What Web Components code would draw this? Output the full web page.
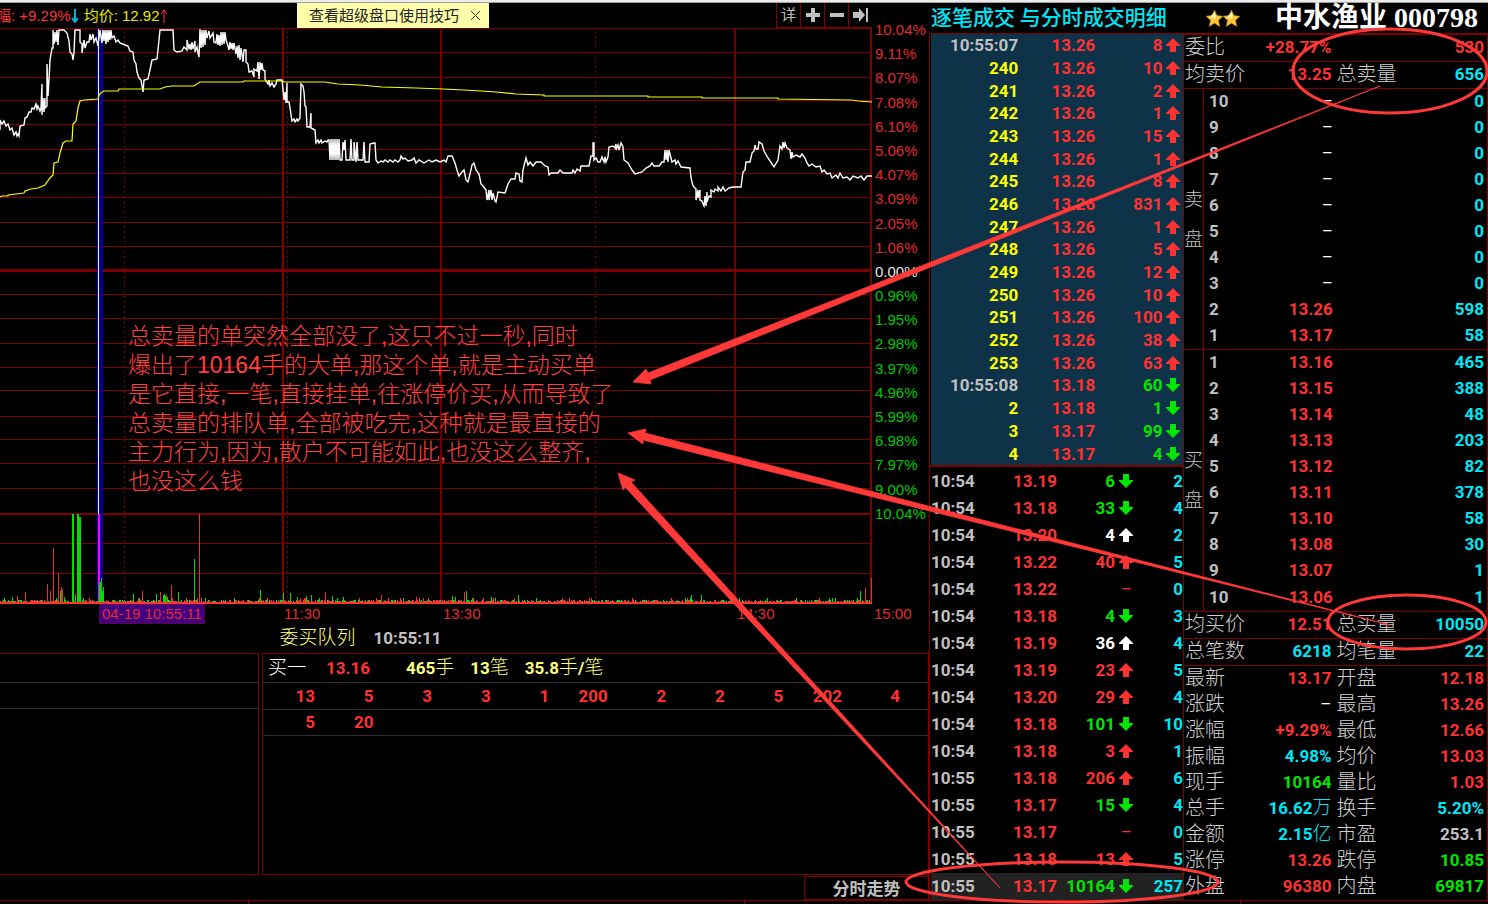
<!DOCTYPE html>
<html lang="zh-CN">
<head>
<meta charset="utf-8">
<title>中水渔业 000798</title>
<style>
  html, body {
    margin: 0;
    height: 100%;
    background: #000;
  }
  body {
    --line: #800000;
    --red: #ff3232;
    --green: #00e600;
    --cyan: #00e6f6;
    --grey: #c0c0c0;
    --yellow: #ffff00;
    --pale: #ffff80;
    --num: bold 17px/20px Roboto, "Noto Sans CJK SC", sans-serif;
    --label: 400 15px/20px "Liberation Sans", "Noto Sans CJK SC", sans-serif;
    color: var(--grey);
    font: var(--num);
  }
</style>
</head>
<body>
<trade-desk></trade-desk>

<script>
// Estilos comunes de todas las tablas de cotización
const tableCss = `
  table { width: 100%; height: 100%; border-collapse: collapse; table-layout: fixed; font: var(--num); }
  td, th { padding: 0; white-space: nowrap; text-align: right; }
  th { text-align: left; font-weight: 300; font-size: 20px; color: #d0d0d0; }
  .cj { font-weight: 300; font-size: 19px; }
  .red { color: var(--red); }
  .green { color: var(--green); }
  .cyan { color: var(--cyan); }
  .yellow { color: var(--yellow); }
  .grey { color: var(--grey); }
  .white { color: #fff; }
  svg { display: inline-block; vertical-align: -1px; fill: currentColor; }
`;

const COLORS = { r: 'red', g: 'green', c: 'cyan', y: 'yellow', w: 'white', s: 'grey' };

const arrow = (dir) => {
  if (dir === 'u') return '<svg width="14" height="14" viewBox="0 0 14 14"><path d="M7 0 14 7V8H10V14H4V8H0V7Z"/></svg>';
  if (dir === 'd') return '<svg width="14" height="14" viewBox="0 0 14 14"><path d="M4 0H10V6H14V7L7 14 0 7V6H4Z"/></svg>';
  return '–';
};

// Los caracteres chinos van en trazo fino junto a las cifras en negrita
const mix = (text) => text.replace(/[\u4e00-\u9fff]+/g, '<span class="cj">$&</span>');

function mount(host, html) {
  const template = document.createElement('template');
  template.innerHTML = html;
  host.attachShadow({ mode: 'open' }).appendChild(template.content.cloneNode(true));
}

class TradeDesk extends HTMLElement {
  constructor() {
    super();
    mount(this, `
      <style>
        :host { display: flex; flex-direction: column; position: relative; height: 100vh; min-height: 800px; overflow: hidden; background: #000; }
        .edge { height: 2px; flex: none; background: #ececec; border-bottom: 1px solid #a0a0a0; }
        main { flex: 1; min-height: 0; display: grid; grid-template-columns: 929fr 255fr 304fr; grid-template-rows: minmax(0, 1fr); }
        .left, .right { display: flex; flex-direction: column; min-width: 0; min-height: 0; }
        .right { grid-column: 2 / 4; }
        .cols { flex: 1; min-height: 0; display: grid; grid-template-columns: 255fr 304fr; grid-template-rows: minmax(0, 1fr); border-top: 1px solid var(--line); }
        time-chart { flex: 1; min-height: 0; }
        .foot { flex: none; height: 3px; border-top: 1px solid var(--line); display: flex; justify-content: space-around; }
        .foot i { width: 1px; background: var(--line); }
      </style>
      <div class="edge"></div>
      <main>
        <div class="left">
          <chart-bar></chart-bar>
          <time-chart></time-chart>
          <order-queue></order-queue>
        </div>
        <div class="right">
          <stock-title>
            <span slot="mode">逐笔成交 与分时成交明细</span>
            <span slot="name">中水渔业 000798</span>
          </stock-title>
          <div class="cols">
            <trade-list></trade-list>
            <quote-board></quote-board>
          </div>
        </div>
      </main>
      <div class="foot"><i></i><i></i><i></i></div>
      <mark-layer>
        总卖量的单突然全部没了,这只不过一秒,同时<br>
        爆出了10164手的大单,那这个单,就是主动买单<br>
        是它直接,一笔,直接挂单,往涨停价买,从而导致了<br>
        总卖量的排队单,全部被吃完,这种就是最直接的<br>
        主力行为,因为,散户不可能如此,也没这么整齐,<br>
        也没这么钱
      </mark-layer>
    `);
  }
}

class ChartBar extends HTMLElement {
  constructor() {
    super();
    mount(this, `
      <style>
        :host { display: flex; align-items: stretch; height: 25px; flex: none; font: var(--label); padding-right: 57px; overflow: hidden; }
        .stats { flex: 299; display: flex; align-items: center; white-space: nowrap; min-width: 0; }
        .stats .pct { color: var(--red); margin-left: -4px; }
        .stats .avg { color: #e8e800; margin-left: 5px; }
        .stats svg { flex: none; }
        .tip { flex: none; display: flex; align-items: center; gap: 10px; background: #ffffaa; color: #222; padding: 0 6px 0 12px; }
        .tip button { border: 0; background: none; padding: 0; width: 14px; height: 20px; color: #333; display: grid; place-items: center; }
        .gap { flex: 289; }
        .tools { flex: none; display: flex; }
        .tools button { width: 24px; padding: 0; border: 0 solid var(--line); border-width: 0 0 1px 1px; background: #000; color: var(--grey); font: inherit; display: grid; place-items: center; }
      </style>
      <div class="stats">
        <span class="pct">幅: +9.29%</span>
        <svg width="8" height="14"><path d="M4 0V12M1 9 4 13 7 9" stroke="#00b4e6" stroke-width="2" fill="none"/></svg>
        <span class="avg">均价: 12.92</span>
        <svg width="8" height="14"><path d="M4 14V1M1 5 4 1 7 5" stroke="#ff3232" fill="none"/></svg>
      </div>
      <div class="tip"><span>查看超级盘口使用技巧</span>
        <button aria-label="关闭"><svg width="9" height="9"><path d="M0 0 9 9M9 0 0 9" stroke="currentColor"/></svg></button>
      </div>
      <div class="gap"></div>
      <div class="tools">
        <button>详</button>
        <button aria-label="放大"><svg width="14" height="14"><path d="M7 0V14M0 7H14" stroke="currentColor" stroke-width="4"/></svg></button>
        <button aria-label="缩小"><svg width="14" height="14"><path d="M0 7H14" stroke="currentColor" stroke-width="4"/></svg></button>
        <button aria-label="移到最后"><svg width="16" height="14"><path d="M0 4H6V0L12 7 6 14V10H0Z" fill="currentColor"/><path d="M14 0V14" stroke="currentColor" stroke-width="2"/></svg></button>
      </div>
    `);
  }
}

const PRICE = `0,130 0,120 2,124 4,121 6,126 8,124 10,130 12,128 14,135 16,132 17,136 18,134 19,136 20,126 24,125 25,118
  27,117 29,112 31,112 32,108 34,109 36,104 37,109 38,106 40,111 41,108 42,84 42,115 43,98 44,112 45,98 45,108 47,106 47,64 48,96
  49,80 50,60 52,48 53,48 53,30 54,44 55,32 56,42 57,30 58,45 59,30 64,30 67,33 69,41 70,52 72,54 73,60 74,53 75,30 80,30 80,42 82,44
  82,53 84,40 85,48 87,42 89,42 90,34 91,40 93,34 94,42 96,38 98,46 100,30 102,43 103,30 104,41 105,30 106,44 107,30 108,42 109,30
  110,40 111,30 112,38 114,36 116,42 118,40 120,43 125,45 128,46 130,51 133,52 134,60 136,64 137,72 139,78 141,80 143,92 144,80
  148,79 150,70 152,60 157,59 159,40 160,30 173,30 174,50 177,52 182,51 184,47 187,50 187,40 189,49 190,44 191,50 192,42 193,49
  195,41 195,52 197,47 198,53 199,57 200,29 201,48 202,30 203,47 204,30 205,45 206,30 207,38 209,31 210,38 213,33 214,42 216,43
  217,34 218,45 219,35 220,46 221,32 222,45 223,32 224,44 225,32 226,40 228,46 229,50 230,42 231,49 232,43 233,50 234,43 236,54
  237,46 238,58 239,45 240,60 241,48 242,54 243,62 244,50 246,50 246,62 248,64 249,72 252,71 254,77 254,69 257,71 258,62 259,79
  260,62 261,70 262,63 263,70 265,71 265,79 268,84 269,80 270,86 272,83 274,87 276,84 277,80 282,80 284,100 285,92 286,103 287,83
  287,102 289,102 290,108 292,121 294,119 295,122 297,119 298,121 300,118 301,84 303,86 304,92 305,106 306,107 307,127 310,127
  311,113 311,128 315,130 316,143 318,140 319,143 321,140 322,143 325,141 327,142 328,140 329,140 330,160 331,139 332,160 333,139
  334,160 335,139 336,160 337,139 338,160 339,139 340,160 342,160 343,142 344,150 345,140 346,160 350,160 351,139 352,160 354,160
  354,142 356,162 357,142 358,160 363,160 364,142 365,162 369,162 370,144 374,143 375,143 376,160 378,163 381,161 383,162 385,160
  388,162 390,160 393,162 395,160 398,162 400,160 401,156 403,159 405,158 408,161 412,160 414,158 416,163 419,160 424,163 429,160
  432,162 436,160 440,162 444,160 446,162 448,156 452,156 455,163 457,170 459,176 462,172 464,170 466,180 468,182 470,174 472,165
  474,163 476,170 479,174 481,184 483,186 486,190 487,200 489,190 489,200 491,190 492,200 493,193 495,201 496,202 498,192 505,193
  508,184 511,179 515,179 516,173 519,174 520,181 522,182 523,170 525,162 526,158 528,165 530,162 533,166 536,162 541,162 545,166
  548,167 549,175 551,173 558,173 560,170 563,173 572,173 573,170 575,173 577,169 580,171 581,166 589,166 591,156 593,156 593,143
  594,143 594,160 596,158 598,162 600,162 602,157 604,162 605,157 606,162 608,157 609,147 613,146 615,148 616,144 616,150 618,145
  619,150 621,143 623,147 624,160 628,163 632,170 635,174 642,172 646,168 650,166 652,163 654,166 659,166 662,162 664,162 665,150
  666,160 667,150 668,162 669,150 672,162 675,160 676,164 678,161 681,167 690,168 691,178 693,186 696,189 696,200 698,190 698,198
  700,190 700,200 702,201 703,204 704,206 705,196 706,206 707,192 707,202 709,196 711,197 711,190 714,192 715,189 718,191 718,187
  721,191 723,187 725,191 729,188 733,187 741,187 743,172 745,170 746,162 750,162 752,153 754,151 755,145 756,149 758,149 759,142
  762,144 764,151 768,158 772,164 774,167 778,160 780,146 782,149 783,142 784,148 785,143 787,148 790,150 791,159 792,152 793,157
  796,155 800,157 802,154 805,158 807,163 809,166 812,164 816,167 820,166 822,172 824,170 827,174 830,173 832,178 836,175 838,178
  840,173 843,178 847,177 850,180 853,176 858,178 861,176 864,180 867,176 872,176`;

const AVERAGE = `0,197 2,196 8,196 8,195 16,194 24,193 25,191 31,189 38,188 45,185 47,182 50,178 53,175 54,163 58,162 60,153 63,143
  66,141 72,141 73,124 76,121 78,108 80,101 84,100 98,99 99,95 102,92 104,91 118,91 119,89 160,89 165,87 172,86 194,86 200,82 243,82
  244,81 283,81 284,82 325,82 338,84 360,85 382,87 416,88 443,89 464,90 481,91 496,92 516,94 544,95 544,96 648,96 648,97 702,97
  702,98 778,98 778,99 851,100 858,101 872,102`;

// x, altura, color de las barras de volumen más altas
const PEAKS = [[17,7,'r'],[12,6,'g'],[25,11,'r'],[47,19,'r'],[50,12,'r'],[53,55,'r'],[58,30,'r'],[60,12,'g'],[61,16,'r'],[62,14,'r'],[64,6,'g'],
  [72,89,'g'],[73,46,'g'],[75,8,'g'],[77,89,'g'],[78,29,'g'],[79,86,'g'],[99,20,'g'],[100,21,'g'],[101,25,'g'],[102,12,'g'],[103,16,'g'],
  [133,9,'g'],[142,12,'r'],[156,9,'g'],[160,11,'r'],[163,8,'g'],[164,9,'g'],[165,7,'g'],[166,8,'r'],[167,6,'g'],[171,18,'r'],[178,11,'g'],
  [194,44,'g'],[199,89,'r'],[260,13,'g'],[283,10,'g'],[290,10,'g'],[297,6,'g'],[306,7,'g'],[311,8,'g'],[325,11,'r'],[332,7,'g'],[343,6,'g'],
  [381,8,'r'],[416,6,'r'],[452,7,'g'],[455,6,'g'],[464,11,'r'],[466,12,'g'],[491,6,'g'],[514,5,'r'],[518,8,'g'],[691,8,'g'],[701,8,'g'],
  [832,5,'g'],[857,5,'g'],[860,12,'g'],[865,15,'r'],[871,25,'r']];

class TimeChart extends HTMLElement {
  constructor() {
    super();
    const rows = [28, 52, 77, 100, 124, 149, 173, 197, 222, 246, 270, 294, 318, 343, 367, 390, 416, 439, 463, 488, 513, 543, 573];
    const hLines = rows.map((y) => `<path d="M0 ${y + 0.5}H872" stroke-width="${y === 270 ? 3 : y === 513 ? 2 : 1}"/>`).join('');
    const dots = [124, 287, 595].map((x) => `<path d="M${x + 0.5} 31V601" stroke-dasharray="2 3"/>`).join('');

    let bars = '';
    let seed = 7;
    for (let x = 0; x < 870; x++) {
      seed = (seed * 1103 + 377) % 9973;
      const h = seed % 17 === 0 ? 4 : seed % 3;
      bars += `<path d="M${x + 0.5} 603V${602 - h}" stroke="${seed % 5 < 2 ? '#00e600' : '#ff3232'}"/>`;
    }
    for (const [x, h, c] of PEAKS) {
      bars += `<path d="M${x + 0.5} 603V${603 - h}" stroke="${c === 'g' ? '#00e000' : '#e83030'}" stroke-width="${h > 80 && c === 'g' ? 2 : 1}"/>`;
    }

    const pct = ['10.04', '9.11', '8.07', '7.08', '6.10', '5.06', '4.07', '3.09', '2.05', '1.06', '0.00',
      '0.96', '1.95', '2.98', '3.97', '4.96', '5.99', '6.98', '7.97', '9.00', '10.04'];
    const labels = pct.map((p, i) => `<span class="${i < 10 ? 'up' : i > 10 ? 'down' : 'zero'}">${p}%</span>`).join('');

    mount(this, `
      <style>
        :host { display: flex; flex-direction: column; font: var(--label); color: #e02c2c; }
        .plot { flex: 1; min-height: 0; display: grid; grid-template-columns: minmax(0, 1fr) 57px; grid-template-rows: minmax(0, 1fr); }
        svg { width: 100%; height: 100%; display: block; }
        .scale { display: flex; flex-direction: column; justify-content: space-between; margin: -8px 0 80px; padding-left: 3px; }
        .scale span { line-height: 20px; }
        .down { color: #00c800; }
        .zero { color: #e6e6e6; }
        .times { flex: none; display: grid; grid-template-columns: 99fr 184fr 159fr 294fr 137fr 56fr; height: 20px; }
        .times span { white-space: nowrap; justify-self: start; padding-left: 1px; }
        .times .now { background: #400080; padding: 0 2px; border: 1px solid #600050; line-height: 18px; }
      </style>
      <div class="plot">
        <svg viewBox="0 28 872 576" preserveAspectRatio="none" fill="none" shape-rendering="crispEdges">
          <g stroke="#800000">
            ${hLines}
            <path d="M283 29V604" stroke-width="2"/><path d="M441 29V604M735 29V604" stroke="#700000" stroke-width="2"/>
            <path d="M871 29V604" stroke-width="2"/>
            ${dots}
          </g>
          <rect x="97" y="29" width="6" height="574" fill="#0000a0"/>
          <path d="M98.500 29V514" stroke="#ffff80"/>
          <path d="M98.500 514V603" stroke="#ff00ff" stroke-width="2"/>
          ${bars}
          <path d="M0 603H872" stroke="#ff3232" stroke-width="2"/>
          <g shape-rendering="auto">
            <polyline points="${PRICE}" stroke="#fff" stroke-width="1.4"/>
            <polyline points="${AVERAGE}" stroke="#ffff00" stroke-width="1.2"/>
          </g>
        </svg>
        <div class="scale">${labels}</div>
      </div>
      <div class="times">
        <span></span><span class="now">04-19 10:55:11</span><span>11:30</span><span>13:30</span><span>14:30</span><span>15:00</span>
      </div>
    `);
  }
}

class OrderQueue extends HTMLElement {
  constructor() {
    super();
    const cells = (list) => Array.from({ length: 11 }, (_, i) => `<td>${list[i] || ''}</td>`).join('');
    mount(this, `
      <style>
        ${tableCss}
        :host { display: block; flex: none; }
        h2 { margin: 0; height: 29px; display: flex; align-items: center; justify-content: center; gap: 18px; padding: 0 208px 2px 0; box-sizing: border-box; font: var(--num); }
        h2 .cj { color: var(--pale); }
        .boxes { display: grid; grid-template-columns: 259fr 667fr; gap: 3px; height: 222px; }
        .box { border: 1px solid var(--line); min-width: 0; }
        .empty { border-left: 0; }
        .empty i { display: block; height: 25px; border-bottom: 1px solid #303030; }
        .empty i:first-child { height: 28px; }
        .head { display: flex; align-items: center; height: 28px; padding-left: 5px; border-bottom: 1px solid #303030; color: var(--pale); white-space: nowrap; }
        .head .white { margin-right: 20px; }
        .head .red { margin-right: 36px; }
        .head .qty { margin-right: 16px; }
        table { height: 53px; color: var(--red); }
        tr { height: 26px; border-bottom: 1px solid #303030; }
        td:last-child { padding-right: 28px; }
        .tabs { display: flex; justify-content: flex-end; height: 25px; padding-top: 1px; box-sizing: border-box; }
        .tabs button { width: 125px; padding: 0; border: 1px solid var(--line); background: #000; color: var(--grey); font: bold 17px/20px "Noto Sans CJK SC", sans-serif; }
      </style>
      <h2><span class="cj">委买队列</span><span>10:55:11</span></h2>
      <div class="boxes">
        <div class="box empty"><i></i><i></i></div>
        <div class="box">
          <div class="head"><span class="cj white">买一</span><span class="red">13.16</span><span class="qty">${mix('465手')}</span><span class="qty">${mix('13笔')}</span><span>${mix('35.8手/笔')}</span></div>
          <table>
            <colgroup><col style="width:52px">${'<col>'.repeat(9)}<col style="width:86px"></colgroup>
            <tr>${cells([13, 5, 3, 3, 1, 200, 2, 2, 5, 202, 4])}</tr>
            <tr>${cells([5, 20])}</tr>
          </table>
        </div>
      </div>
      <div class="tabs"><button>分时走势</button></div>
    `);
  }
}

class StockTitle extends HTMLElement {
  constructor() {
    super();
    const star = '<svg width="17" height="17" viewBox="0 0 17 17"><path d="M8.500 0 11 5.500 17 6.200 12.500 10.300 13.800 16.500 8.500 13.300 3.200 16.500 4.500 10.300 0 6.200 6 5.500Z" fill="#ffc83c" stroke="#b47814" stroke-width=".6"/><path d="M8.500 2 10 6.500 8.500 9 4 7Z" fill="#fff0a0"/></svg>';
    mount(this, `
      <style>
        :host { display: flex; align-items: center; height: 30px; flex: none; padding: 0 10px 0 2px; }
        .mode { color: var(--cyan); font: 500 21px/28px "Noto Sans CJK SC", sans-serif; white-space: nowrap; padding-bottom: 4px; }
        .stars { display: flex; margin: 0 auto; padding-left: 5px; }
        .name { margin: 0; color: #fff; font: bold 28px/28px "Liberation Serif", "Noto Sans CJK SC", serif; white-space: nowrap; }
      </style>
      <div class="mode"><slot name="mode"></slot></div>
      <div class="stars">${star}${star}</div>
      <h1 class="name"><slot name="name"></slot></h1>
    `);
  }
}

// hora, precio, cantidad, dirección
const TICKS = `10:55:07 13.26 8 u|240 13.26 10 u|241 13.26 2 u|242 13.26 1 u|243 13.26 15 u|244 13.26 1 u|245 13.26 8 u|246 13.26 831 u|247 13.26 1 u
|248 13.26 5 u|249 13.26 12 u|250 13.26 10 u|251 13.26 100 u|252 13.26 38 u|253 13.26 63 u|10:55:08 13.18 60 d|2 13.18 1 d|3 13.17 99 d|4 13.17 4 d`;

// hora, precio, cantidad, dirección, número de operaciones, color
const MINUTES = `10:54 13.19 6 d 2 g|10:54 13.18 33 d 4 g|10:54 13.20 4 u 2 w|10:54 13.22 40 u 5 r|10:54 13.22 _ - 0 r|10:54 13.18 4 d 3 g
|10:54 13.19 36 u 4 w|10:54 13.19 23 u 5 r|10:54 13.20 29 u 4 r|10:54 13.18 101 d 10 g|10:54 13.18 3 u 1 r|10:55 13.18 206 u 6 r
|10:55 13.17 15 d 4 g|10:55 13.17 _ - 0 r|10:55 13.18 13 u 5 r|10:55 13.17 10164 d 257 g`;

const parse = (text) => text.split('|').map((row) => row.trim().split(' '));

class TradeList extends HTMLElement {
  constructor() {
    super();
    const ticks = parse(TICKS).map(([t, p, v, d]) => {
      const c = d === 'u' ? 'red' : 'green';
      return `<tr><td class="${t.includes(':') ? 'grey' : 'yellow'}">${t}</td><td class="red">${p}</td><td class="${c}">${v}</td><td class="${c}">${arrow(d)}</td></tr>`;
    }).join('');
    const minutes = parse(MINUTES).map(([t, p, v, d, n, c]) => `<tr><td class="grey">${t}</td><td class="red">${p}</td>
      <td class="${COLORS[c]}">${v === '_' ? '' : v}</td><td class="${COLORS[c]} ${d === '-' ? 'flat' : ''}">${arrow(d)}</td><td class="cyan">${n}</td></tr>`).join('');
    mount(this, `
      <style>
        ${tableCss}
        :host { display: flex; flex-direction: column; border: solid var(--line); border-width: 0 1px 0 1px; box-sizing: border-box; min-width: 0; min-height: 0; }
        .ticks { flex: 431; min-height: 0; background: #0e3248; border-left: 1px solid #000; padding-right: 3px; }
        .minutes { flex: 433; min-height: 0; border-top: 2px solid var(--line); padding: 0 0 0 1px; }
        .minutes td:first-child { text-align: left; }
        .minutes td:nth-child(4) { text-align: center; }
        .minutes tr:last-child { background: #222; }
        td.flat { font-weight: 400; }
      </style>
      <div class="ticks"><table><colgroup><col style="width:35%"><col style="width:31%"><col style="width:27%"><col></colgroup>${ticks}</table></div>
      <div class="minutes"><table><colgroup><col style="width:18%"><col style="width:32%"><col style="width:23%"><col style="width:9%"><col></colgroup>${minutes}</table></div>
    `);
  }
}

class QuoteBoard extends HTMLElement {
  constructor() {
    super();
    const pair = ([l1, v1, c1, l2, v2, c2]) =>
      `<tr><th scope="row">${l1}</th><td class="${v1 === '–' ? 'dash' : COLORS[c1]}">${mix(v1)}</td><th scope="row" class="second">${l2}</th><td class="${COLORS[c2]}">${v2}</td></tr>`;
    const pairs = (list) => `<table><colgroup><col style="width:22%"><col style="width:27%"><col style="width:22%"><col></colgroup>${list.map(pair).join('')}</table>`;
    const level = ([n, p, v]) => `<tr><td class="n">${n}</td><td class="${p === '–' ? 'dash' : 'red'}">${p}</td><td class="cyan">${v}</td></tr>`;
    const levels = (list) => `<table><colgroup><col style="width:17%"><col style="width:29%"><col></colgroup>${list.map(level).join('')}</table>`;

    const sells = [[10, '–', 0], [9, '–', 0], [8, '–', 0], [7, '–', 0], [6, '–', 0], [5, '–', 0], [4, '–', 0], [3, '–', 0], [2, '13.26', 598], [1, '13.17', 58]];
    const buys = [[1, '13.16', 465], [2, '13.15', 388], [3, '13.14', 48], [4, '13.13', 203], [5, '13.12', 82], [6, '13.11', 378],
      [7, '13.10', 58], [8, '13.08', 30], [9, '13.07', 1], [10, '13.06', 1]];
    const stats = [
      ['最新', '13.17', 'r', '开盘', '12.18', 'r'],
      ['涨跌', '–', 'w', '最高', '13.26', 'r'],
      ['涨幅', '+9.29%', 'r', '最低', '12.66', 'r'],
      ['振幅', '4.98%', 'c', '均价', '13.03', 'r'],
      ['现手', '10164', 'g', '量比', '1.03', 'r'],
      ['总手', '16.62万', 'c', '换手', '5.20%', 'c'],
      ['金额', '2.15亿', 'c', '市盈', '253.1', 's'],
      ['涨停', '13.26', 'r', '跌停', '10.85', 'g'],
      ['外盘', '96380', 'r', '内盘', '69817', 'g'],
    ];
    mount(this, `
      <style>
        ${tableCss}
        :host { display: flex; flex-direction: column; border-right: 1px solid var(--line); box-sizing: border-box; min-width: 0; min-height: 0; }
        section { min-height: 0; border-top: 1px solid var(--line); padding: 0 3px 0 1px; }
        section:first-child { border-top: 0; }
        .one { flex: 1; }
        .nine { flex: 9; }
        .book { flex: 10; display: grid; grid-template-columns: 20px minmax(0, 1fr); grid-template-rows: minmax(0, 1fr); padding-left: 0; }
        table { margin-top: -1px; }
        .side { border-right: 1px solid var(--line); display: flex; flex-direction: column; align-items: center; gap: 20px; font: 300 19px/20px "Noto Sans CJK SC", sans-serif; padding-top: 99px; }
        td.n { text-align: left; padding-left: 5px; color: var(--grey); }
        td.dash { font-weight: 400; color: #fff; }
        th.second { padding-left: 5px; }
      </style>
      <section class="one">${pairs([['委比', '+28.77%', 'r', '', '530', 'r']])}</section>
      <section class="one">${pairs([['均卖价', '13.25', 'r', '总卖量', '656', 'c']])}</section>
      <section class="book"><div class="side"><span>卖</span><span>盘</span></div>${levels(sells)}</section>
      <section class="book"><div class="side"><span>买</span><span>盘</span></div>${levels(buys)}</section>
      <section class="one">${pairs([['均买价', '12.51', 'r', '总买量', '10050', 'c']])}</section>
      <section class="one">${pairs([['总笔数', '6218', 'c', '均笔量', '22', 'c']])}</section>
      <section class="nine">${pairs(stats)}</section>
    `);
  }
}

// Capa de notas sobre todo el escritorio
class MarkLayer extends HTMLElement {
  constructor() {
    super();
    mount(this, `
      <style>
        :host { position: absolute; inset: 0; pointer-events: none; }
        svg { position: absolute; inset: 0; width: 100%; height: 100%; }
        p { position: absolute; left: 128px; top: 322px; margin: 0; color: #ff4040; font: 300 23px/29px "Liberation Sans", "Noto Sans CJK SC", sans-serif; white-space: nowrap; }
      </style>
      <p><slot></slot></p>
      <svg viewBox="0 0 1488 904" preserveAspectRatio="none">
        <g fill="#ff3838" stroke="#ff3838" stroke-width=".8">
          <path d="M633 382 646 369 648 373 1380 86 650 380 651 384Z"/>
          <path d="M628 433 646 429 645 433 1390 625 643 440 643 444Z"/>
          <path d="M618 473 635 480 631 482 1000 888 625 487 623 490Z"/>
        </g>
        <g fill="none" stroke="#ff3838" stroke-width="3">
          <ellipse cx="1390" cy="71" rx="97" ry="42"/>
          <ellipse cx="1407" cy="622" rx="79" ry="27"/>
          <ellipse cx="1062" cy="882" rx="156" ry="20"/>
        </g>
      </svg>
    `);
  }
}

customElements.define('chart-bar', ChartBar);
customElements.define('time-chart', TimeChart);
customElements.define('order-queue', OrderQueue);
customElements.define('stock-title', StockTitle);
customElements.define('trade-list', TradeList);
customElements.define('quote-board', QuoteBoard);
customElements.define('mark-layer', MarkLayer);
customElements.define('trade-desk', TradeDesk);
</script>
</body>
</html>
